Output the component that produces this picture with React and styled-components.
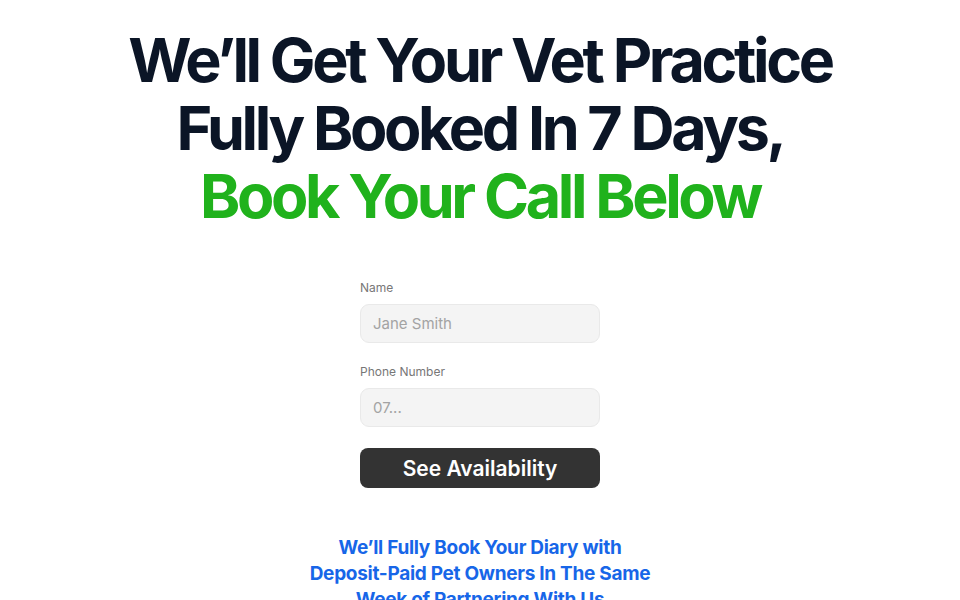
import React from 'react';
import styled, { createGlobalStyle } from 'styled-components';

const GlobalStyle = createGlobalStyle`
  body {
    margin: 0;
    background: #ffffff;
    font-family: Inter, "Noto Sans", sans-serif;
  }
`;

const Page = styled.main`
  display: flex;
  flex-direction: column;
  align-items: center;
  padding-top: 26px;
`;

const Headline = styled.h1`
  margin: 0;
  font-size: 61px;
  line-height: 68px;
  font-weight: 700;
  letter-spacing: -0.055em;
  text-align: center;
  color: #0b1526;
`;

const Accent = styled.span`
  color: #20b21c;
`;

const Form = styled.form`
  display: flex;
  flex-direction: column;
  width: 240px;
  margin-top: 50px;
`;

const Label = styled.label`
  font-size: 12px;
  line-height: 16px;
  color: #777777;
  margin-bottom: 8px;
`;

const Input = styled.input`
  box-sizing: border-box;
  height: 39px;
  padding: 0 12px;
  border: 1px solid #e9e9e9;
  border-radius: 9px;
  background: #f4f4f4;
  font-family: Inter, "Noto Sans", sans-serif;
  font-size: 15px;
  color: #333;
  margin-bottom: 21px;
  &::placeholder {
    color: #a3a3a3;
  }
`;

const Submit = styled.button`
  height: 40px;
  border: none;
  border-radius: 8px;
  background: #333333;
  color: #ffffff;
  font-family: Inter, "Noto Sans", sans-serif;
  font-size: 21px;
  font-weight: 600;
  cursor: pointer;
`;

const Promise = styled.p`
  margin: 47px 0 0;
  text-align: center;
  font-size: 19px;
  line-height: 26px;
  font-weight: 700;
  letter-spacing: -0.015em;
  color: #1766e8;
`;

export default function App() {
  return (
    <>
      <GlobalStyle />
      <Page>
        <Headline>
          We’ll Get Your Vet Practice
          <br />
          Fully Booked In 7 Days,
          <br />
          <Accent>Book Your Call Below</Accent>
        </Headline>
        <Form onSubmit={(e) => e.preventDefault()}>
          <Label htmlFor="name">Name</Label>
          <Input id="name" placeholder="Jane Smith" />
          <Label htmlFor="phone">Phone Number</Label>
          <Input id="phone" placeholder="07..." />
          <Submit type="submit">See Availability</Submit>
        </Form>
        <Promise>
          We’ll Fully Book Your Diary with
          <br />
          Deposit-Paid Pet Owners In The Same
          <br />
          Week of Partnering With Us
        </Promise>
      </Page>
    </>
  );
}
